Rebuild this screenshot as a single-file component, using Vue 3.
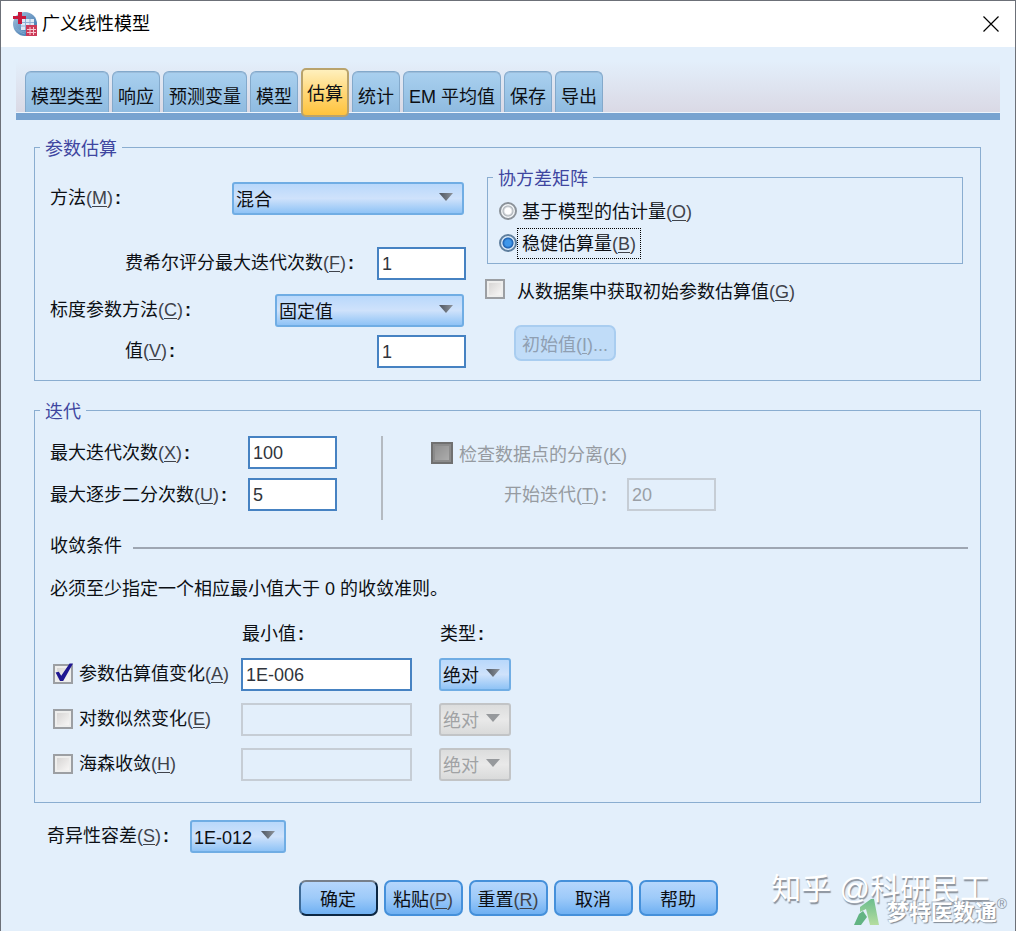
<script setup>
import { ref } from 'vue'

const tabs = ['模型类型', '响应', '预测变量', '模型', '估算', '统计', 'EM 平均值', '保存', '导出']
const activeTab = ref('估算')

const method = ref('混合')
const fisher = ref('1')
const scaleMethod = ref('固定值')
const scaleValue = ref('1')
const covariance = ref('robust')
const fromDataset = ref(false)

const maxIterations = ref('100')
const maxHalving = ref('5')
const separation = ref(false)
const startIteration = ref('20')

const criteria = ref([
  { id: 'param', text: '参数估算值变化', key: 'A', on: true, min: '1E-006', type: '绝对' },
  { id: 'loglik', text: '对数似然变化', key: 'E', on: false, min: '', type: '绝对' },
  { id: 'hessian', text: '海森收敛', key: 'H', on: false, min: '', type: '绝对' },
])

const tolerance = ref('1E-012')
const actions = [
  { text: '确定', primary: true },
  { text: '粘贴', key: 'P' },
  { text: '重置', key: 'R' },
  { text: '取消' },
  { text: '帮助' },
]
</script>

<template>
  <main class="window">
    <header class="titlebar">
      <svg class="app-icon" viewBox="0 0 24 24" aria-hidden="true">
        <defs>
          <linearGradient id="globe" x1="0" y1="0" x2="1" y2="1">
            <stop offset="0" stop-color="#a9c4de" />
            <stop offset="1" stop-color="#2f6ca8" />
          </linearGradient>
        </defs>
        <circle cx="12" cy="12" r="12" fill="url(#globe)" />
        <path d="M2 14c3 4 6 6 11 6M3 17c2 2 5 4 9 5" stroke="#7fa9d0" fill="none" />
        <rect x="8" y="7" width="13" height="11" fill="#dfeaf5" />
        <path d="M8 10.500h13M8 14h13M12.500 7v11M17 7v11" stroke="#8fb2d6" />
        <path d="M5 0h4v4h4v3H9v5H5V7H0V4h5z" fill="#c9183c" />
        <rect x="13" y="13" width="11" height="11" fill="#cc3a58" />
        <path d="M14 17.500h9M14 20.500h9M17 15v8M20.500 15v8" stroke="#f7c9d2" />
      </svg>
      <h1>广义线性模型</h1>
      <button class="close" aria-label="关闭">
        <svg viewBox="0 0 16 16"><path d="M.5.500l15 15M15.500.500l-15 15" stroke="#000" stroke-width="1.200" /></svg>
      </button>
    </header>

    <nav class="tabs">
      <button
        v-for="tab in tabs"
        :key="tab"
        class="tab"
        :class="{ active: tab === activeTab }"
        @click="activeTab = tab"
      >{{ tab }}</button>
    </nav>

    <div class="content">
      <fieldset class="panel estimation">
        <legend>参数估算</legend>
        <div class="est-grid">
          <div class="est-left">
            <div class="row">
              <label for="method">方法<span class="mn">(<u>M</u>)</span><b>:</b></label>
              <span class="select wide"><select id="method" v-model="method"><option>混合</option></select></span>
            </div>
            <div class="row fisher">
              <label class="inset" for="fisher">费希尔评分最大迭代次数<span class="mn">(<u>F</u>)</span><b>:</b></label>
              <input id="fisher" v-model="fisher" class="text short" type="text" />
            </div>
            <div class="row scale">
              <label for="scale">标度参数方法<span class="mn">(<u>C</u>)</span><b>:</b></label>
              <span class="select medium"><select id="scale" v-model="scaleMethod"><option>固定值</option></select></span>
            </div>
            <div class="row value">
              <label class="inset" for="value">值<span class="mn">(<u>V</u>)</span><b>:</b></label>
              <input id="value" v-model="scaleValue" class="text short" type="text" />
            </div>
          </div>
          <div class="est-right">
            <fieldset class="panel covariance">
              <legend>协方差矩阵</legend>
              <label class="radio">
                <input v-model="covariance" type="radio" name="cov" value="model" />
                <span>基于模型的估计量<span class="mn">(<u>O</u>)</span></span>
              </label>
              <label class="radio">
                <input v-model="covariance" type="radio" name="cov" value="robust" />
                <span class="focus">稳健估算量<span class="mn">(<u>B</u>)</span></span>
              </label>
            </fieldset>
            <label class="check dataset">
              <input v-model="fromDataset" type="checkbox" />
              <span>从数据集中获取初始参数估算值<span class="mn">(<u>G</u>)</span></span>
            </label>
            <button class="initial" disabled>初始值(<u>I</u>)...</button>
          </div>
        </div>
      </fieldset>

      <fieldset class="panel iteration">
        <legend>迭代</legend>
        <div class="iter-top">
          <div class="iter-left">
            <label for="maxiter">最大迭代次数<span class="mn">(<u>X</u>)</span><b>:</b></label>
            <input id="maxiter" v-model="maxIterations" class="text short" type="text" />
            <label for="halving">最大逐步二分次数<span class="mn">(<u>U</u>)</span><b>:</b></label>
            <input id="halving" v-model="maxHalving" class="text short" type="text" />
          </div>
          <div class="iter-right">
            <label class="check dim">
              <input v-model="separation" class="solid" type="checkbox" disabled />
              <span>检查数据点的分离(<u>K</u>)</span>
            </label>
            <div class="start dim">
              <label for="start">开始迭代(<u>T</u>)<b>:</b></label>
              <input id="start" v-model="startIteration" class="text short" type="text" disabled />
            </div>
          </div>
        </div>

        <h2 class="divider">收敛条件</h2>
        <p class="hint">必须至少指定一个相应最小值大于 0 的收敛准则。</p>

        <div class="criteria">
          <span class="head min-head">最小值<b>:</b></span>
          <span class="head">类型<b>:</b></span>
          <template v-for="c in criteria" :key="c.id">
            <label class="check criterion">
              <input v-model="c.on" type="checkbox" />
              <span>{{ c.text }}<span class="mn">(<u>{{ c.key }}</u>)</span></span>
            </label>
            <input v-model="c.min" class="text" type="text" aria-label="最小值" :disabled="!c.on" />
            <span class="select" :class="{ off: !c.on }">
              <select v-model="c.type" aria-label="类型" :disabled="!c.on"><option>绝对</option></select>
            </span>
          </template>
        </div>
      </fieldset>

      <div class="tolerance">
        <label for="tol">奇异性容差<span class="mn">(<u>S</u>)</span><b>:</b></label>
        <span class="select tol"><select id="tol" v-model="tolerance"><option>1E-012</option></select></span>
      </div>
    </div>

    <footer class="actions">
      <button v-for="a in actions" :key="a.text" :class="{ primary: a.primary }">{{ a.text }}<span v-if="a.key" class="mn">(<u>{{ a.key }}</u>)</span></button>
    </footer>

    <div class="watermark">知乎 @科研民工</div>
    <div class="brand">
      <svg viewBox="0 0 28 28" aria-hidden="true">
        <defs>
          <linearGradient id="leaf" x1="0" y1="0" x2="0" y2="1">
            <stop offset="0" stop-color="#6cbd8d" />
            <stop offset="1" stop-color="#b5dda0" />
          </linearGradient>
        </defs>
        <path d="M7 8L18 0h3l5 26H17L13 10 7 13z" fill="url(#leaf)" />
        <path d="M1 26l5-11 4-3 4 6-6 8z" fill="#62b483" />
      </svg>
      <span>梦特医数通</span><sup>®</sup>
    </div>
  </main>
</template>

<style>
body {
  margin: 0;
  background: #e3effb;
}
</style>

<style scoped>
* {
  box-sizing: border-box;
}

.window {
  position: relative;
  min-height: 100vh;
  border: 1px solid #6c7078;
  border-bottom: 0;
  background: #e3effb;
  color: #0c0f14;
  font: 18px/24px "Liberation Sans", "Noto Sans CJK SC", sans-serif;
}

button,
input,
select {
  margin: 0;
  font: inherit;
  color: inherit;
}

.mn {
  color: #3f434b;
}

u {
  text-underline-offset: 2px;
}

label b,
.head b {
  margin-left: 2px;
}

.titlebar {
  display: flex;
  align-items: center;
  height: 46px;
  padding: 0 16px 0 12px;
  background: #fff;
}

.app-icon {
  width: 24px;
  height: 24px;
}

h1 {
  flex: 1;
  margin: 0 0 0 5px;
  font-size: 18px;
  font-weight: 400;
  color: #000;
}

.close {
  display: flex;
  padding: 0;
  border: 0;
  background: none;
}

.close svg {
  width: 16px;
  height: 16px;
}

.tabs {
  display: flex;
  align-items: flex-end;
  gap: 3px;
  height: 59px;
  margin: 14px 15px 0;
  padding: 0 9px 8px;
  background: linear-gradient(#78a3d0, #78a3d0) 0 100% / 100% 7px no-repeat,
    linear-gradient(#eef5fd, #eef5fd) 0 51px / 100% 1px no-repeat,
    linear-gradient(#e3effb, #dad9e5) 0 0 / 100% 51px no-repeat;
}

.tab {
  height: 41px;
  padding: 10px 5px 0;
  border: 1px solid #83a9cb;
  border-bottom: 0;
  border-radius: 6px 6px 0 0;
  background: linear-gradient(#a9d0ef, #8fbbe0);
  box-shadow: inset 0 1px #9cbddb;
  line-height: 24px;
  white-space: nowrap;
}

.tab.active {
  height: 49px;
  margin-bottom: -5px;
  border: 2px solid #b9a36c;
  border-radius: 5px;
  padding: 2px 4px 0;
  background: linear-gradient(#fff0bd, #ffd777 50%, #ffc33c);
  box-shadow: none;
}

.content {
  padding: 0 34px 0 33px;
}

.panel {
  min-width: 0;
  margin: 0;
  padding: 0 17px 12px 5px;
  border: 1px solid #8aadd0;
}

legend {
  padding: 4px 5px 0;
  line-height: 24px;
  color: #3f46a0;
}

.estimation {
  margin-top: 13px;
}

.est-grid {
  display: grid;
  grid-template-columns: 416px 1fr;
  gap: 19px;
  padding-left: 10px;
}

.est-left {
  padding-top: 21px;
}

.row {
  display: flex;
  align-items: center;
  justify-content: space-between;
}

.row label {
  padding-bottom: 2px;
}

.inset {
  margin-left: 75px;
}

.fisher {
  margin-top: 32px;
}

.scale {
  margin-top: 14px;
}

.value {
  margin-top: 8px;
}

.text {
  width: 100%;
  height: 33px;
  padding: 2px 3px 0;
  border: 2px solid #4682c2;
  border-radius: 0;
  background: #fff;
  color: #30343c;
}

.text.short {
  width: 89px;
}

.text:disabled {
  border-color: #c6cdd5;
  background: #e3effb;
  color: #9a9fa6;
}

.select {
  position: relative;
  display: block;
  height: 33px;
}

.select::after {
  content: "";
  position: absolute;
  top: 11px;
  right: 11px;
  width: 14px;
  height: 8px;
  clip-path: polygon(0 0, 100% 0, 50% 100%);
  background: linear-gradient(90deg, #4d5560, #8d939b);
  pointer-events: none;
}

.select select {
  appearance: none;
  display: block;
  width: 100%;
  height: 100%;
  padding: 3px 0 0 2px;
  border: 2px solid #70ade4;
  border-radius: 3px;
  background: linear-gradient(#b9d8fb, #cfe2fb 50%, #8fc3f6);
}

.select.off select {
  border-color: #c2c4c6;
  background: linear-gradient(#dcdddd, #e9e9e9 50%, #d9dada);
  color: #a0a2a4;
  opacity: 1;
}

.select.off::after {
  background: #96999c;
}

.select.wide {
  width: 232px;
  margin-right: 2px;
}

.select.medium {
  width: 189px;
  margin-right: 2px;
}

.covariance {
  margin: 2px 0 0 2px;
  padding: 4px 5px;
}

.radio {
  display: flex;
  align-items: center;
  height: 32px;
  padding-left: 6px;
}

.radio input {
  appearance: none;
  width: 18px;
  height: 18px;
  border: 2px solid #8b9299;
  border-radius: 50%;
  background: radial-gradient(#fff 0 3px, #aeb4ba 5px, #f1f4f6 6px);
}

.radio input:checked {
  border-color: #5f7f9e;
  background: radial-gradient(#3f97ea 0 3px, #1d5fae 5px, #d9e9f8 6px);
}

.radio > span {
  height: 31px;
  padding: 3px 4px 2px;
  border: 1px dotted transparent;
}

.radio > .focus {
  border-color: #000;
}

.check {
  display: flex;
  align-items: center;
}

.check input {
  appearance: none;
  display: grid;
  flex: none;
  width: 20px;
  height: 20px;
  border: 2px solid #9c9fa3;
  background: linear-gradient(135deg, #d2d0cf, #fcfbfa);
  box-shadow: inset 0 0 0 2px #eeeeed;
}

.check input:checked::after {
  content: "";
  width: 20px;
  height: 20px;
  margin: -3px 0 0 -1px;
  clip-path: polygon(8% 50%, 24% 46%, 36% 66%, 78% 5%, 95% 5%, 46% 92%, 30% 92%);
  background: #1f1791;
}

.check .solid {
  width: 22px;
  height: 22px;
  border-color: #707070;
  background: linear-gradient(135deg, #8c8c8c, #b0b0b0);
  box-shadow: inset 0 0 0 2px #8b8b8b;
}

.dataset,
.iter-right .check {
  align-items: flex-start;
}

.dataset {
  gap: 12px;
  margin-top: 15px;
}

.dataset span,
.iter-right .check > span {
  padding-top: 1px;
}

.initial,
.actions button {
  height: 36px;
  border: 2px solid #4590da;
  border-radius: 7px;
  background: linear-gradient(#b5d6fc, #9dcaf9 50%, #6fb0f2);
  white-space: nowrap;
}

.initial {
  width: 102px;
  margin: 21px 0 0 29px;
  padding: 4px 0 0;
  border-color: #a9cdf0;
  background: #c0dcf8;
  color: #8f9fb2;
}

.iteration {
  margin-top: 15px;
  padding-bottom: 21px;
}

.iter-top {
  display: flex;
  padding: 12px 0 0 10px;
}

.iter-left {
  display: grid;
  grid-template-columns: 198px 89px;
  gap: 9px 0;
  align-items: center;
  align-content: start;
  width: 333px;
  height: 84px;
  border-right: 2px solid #b4bac1;
}

.iter-right {
  padding: 6px 0 0 48px;
}

.iter-right .check {
  gap: 6px;
  height: 30px;
}

.start {
  display: flex;
  align-items: center;
  justify-content: space-between;
  width: 212px;
  margin: 6px 0 0 73px;
}

.dim {
  color: #969ba1;
}

.divider {
  display: flex;
  align-items: center;
  gap: 11px;
  margin: 14px -5px 0 10px;
  font-size: 18px;
  font-weight: 400;
}

.divider::after {
  content: "";
  flex: 1;
  height: 2px;
  margin-top: 4px;
  background: #9ea6b2;
}

.hint {
  margin: 19px 0 0 10px;
}

.criteria {
  display: grid;
  grid-template-columns: 188px 198px 72px;
  gap: 12px 0;
  align-items: center;
  padding: 21px 0 0 13px;
}

.criteria > .text {
  width: 171px;
}

.min-head {
  grid-column: 2;
}

.head {
  padding-left: 1px;
}

.criterion {
  gap: 6px;
  padding-bottom: 2px;
}

.tolerance {
  display: flex;
  align-items: center;
  margin: 17px 0 0 13px;
}

.tolerance label {
  width: 143px;
  padding-bottom: 2px;
}

.select.tol {
  width: 96px;
}

.actions {
  display: flex;
  justify-content: center;
  gap: 6px;
  padding: 27px 0 14px;
}

.actions button {
  width: 79px;
  padding: 4px 0 0;
}

.actions .primary {
  border-color: #777f8a #0c2743 #0c2743 #3d6995;
}

.watermark {
  position: absolute;
  right: 25px;
  bottom: 24px;
  color: #fff;
  font-size: 30px;
  line-height: 36px;
  text-shadow: 1px 2px 1px #8b929c;
}

.brand {
  position: absolute;
  right: 8px;
  bottom: 4px;
  display: flex;
  align-items: center;
  color: #fff;
  font-size: 22px;
  font-weight: 700;
  line-height: 28px;
  text-shadow: 1px 1px 1px #7f8893, -1px -1px 1px #a9b2bd;
}

.brand svg {
  width: 28px;
  height: 28px;
  margin-right: 6px;
}

.brand sup {
  align-self: flex-start;
  margin-top: -4px;
  font-size: 14px;
  font-weight: 400;
  line-height: 18px;
  color: #8d96a1;
  text-shadow: none;
}
</style>
